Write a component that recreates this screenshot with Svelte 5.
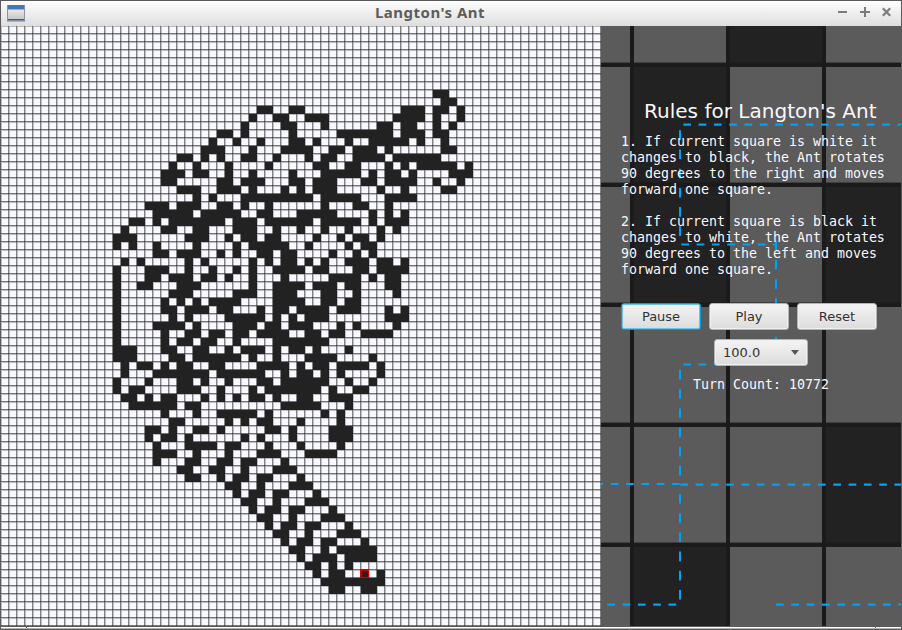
<script>
  const CELL = 8;
  const SIZE = 75;
  const TURNS = 10772;
  // The counter runs two turns ahead of the painted board.
  const PAINTED = TURNS - 2;
  const antCol = 45;
  const antRow = 68;

  // Runs the ant on an unbounded plane and returns the black squares
  // relative to the ant's last position.
  function simulate(turns) {
    const black = new Set();
    let x = 0;
    let y = 0;
    let dx = 0;
    let dy = -1;
    for (let i = 0; i < turns; i++) {
      const key = x + ',' + y;
      if (black.has(key)) {
        black.delete(key);
        [dx, dy] = [dy, -dx];
      } else {
        black.add(key);
        [dx, dy] = [-dy, dx];
      }
      x += dx;
      y += dy;
    }
    let cells = [...black].map((k) => k.split(',').map(Number)).map(([a, b]) => [a - x, b - y]);
    let end = [x, y];
    // Turn the board until the highway leaves toward the lower right.
    while (!(end[0] > 0 && end[1] > 0)) {
      cells = cells.map(([a, b]) => [-b, a]);
      end = [-end[1], end[0]];
    }
    return cells;
  }

  const blackPath = simulate(PAINTED)
    .map(([a, b]) => `M${(a + antCol) * CELL} ${(b + antRow) * CELL}h8v8h-8z`)
    .join('');

  const steps = Array.from({ length: SIZE }, (_, i) => i * CELL);
  const darkLines = steps.map((p) => `M${p + 7} 0h1v600h-1z`).join('');
  const softLines = steps.map((p) => `M${p} 0h1v600h-1z`).join('');
  const darkRows = steps.map((p) => `M0 ${p + 7}h600v1h-600z`).join('');
  const softRows = steps.map((p) => `M0 ${p}h600v1h-600z`).join('');

  const tiles = [[127, -82], [31, 38], [31, 158], [223, 158], [223, 398], [31, 518]];
  const columns = [29, 125, 221];
  const rows = [36, 156, 276, 396, 516];

  const across = [
    'M82.3 98.7H300',
    'M80.3 218.5H176',
    'M82.3 338.5H176',
    'M-5.5 458H80',
    'M79.3 458.6H300',
    'M6.3 578.6H76',
    'M175 578.6H300'
  ];
  const down = ['M79 104.3V218', 'M175 214.8V338', 'M79 344V458', 'M79 468V575'];

  const rules = [
    ['1. If current square is white it', 'changes to black, the Ant rotates', '90 degrees to the right and moves', 'forward one square.'],
    ['2. If current square is black it', 'changes to white, the Ant rotates', '90 degrees to the left and moves', 'forward one square.']
  ];
</script>

<div class="window">
  <header>
    <svg class="app" width="18" height="17" viewBox="0 0 18 17">
      <defs>
        <linearGradient id="pane" x1="0" y1="0" x2="0" y2="1">
          <stop offset="0" stop-color="#e8e8e6" /><stop offset="1" stop-color="#c6c6c4" />
        </linearGradient>
      </defs>
      <rect width="18" height="17" fill="#8b94a2" />
      <rect x="1" width="16" height="4" fill="#4278b8" />
      <rect x="1" y="4" width="16" height="1" fill="#8fb2df" />
      <rect x="1" y="5" width="16" height="9" fill="url(#pane)" />
      <rect x="1" y="14" width="16" height="1" fill="#35609c" />
      <rect y="15" width="18" height="1" fill="#7d8da4" />
      <rect y="16" width="18" height="1" fill="#b4b4b4" />
    </svg>
    <h1>Langton's Ant</h1>
    <svg class="controls" width="54" height="11" viewBox="0 0 54 11" fill="none" stroke="#7b7b7b" stroke-width="2">
      <path d="M0 6H9M22 6H32M27 1V11" />
      <path d="M44.8 2.3L52.2 9.7M52.2 2.3L44.8 9.7" stroke-width="2.2" />
    </svg>
  </header>

  <main>
    <svg class="board" width="600" height="600" viewBox="0 0 600 600" shape-rendering="crispEdges">
      <rect width="600" height="600" fill="#f8f8ff" />
      <path d={softLines + softRows} fill="#222" fill-opacity="0.28" />
      <path d={darkLines} fill="#222" fill-opacity="0.54" />
      <path d={darkRows} fill="#222" fill-opacity="0.6" />
      <path d={blackPath} fill="#222" />
      <rect x={antCol * CELL - 1} y={antRow * CELL - 1} width="9" height="9" fill="#d00000" />
      <rect x={antCol * CELL + 1} y={antRow * CELL + 1} width="6" height="6" fill="#501010" />
      <rect x={antCol * CELL + 2} y={antRow * CELL + 2} width="4" height="4" fill="#222" />
    </svg>

    <aside>
      <svg class="backdrop" width="300" height="600" viewBox="0 0 300 600">
        <rect width="300" height="600" fill="#5b5b5b" />
        {#each tiles as [x, y]}
          <rect {x} {y} width="96" height="120" fill="#222" />
        {/each}
        {#each columns as x}
          <rect {x} width="4" height="600" fill="#1b1b1b" />
        {/each}
        {#each rows as y}
          <rect y={y + 0.6} width="300" height="4.4" fill="#1b1b1b" />
        {/each}
        {#each across as d}
          <path {d} stroke="#00a2f1" stroke-width="2.2" stroke-dasharray="7.7 7.6" />
        {/each}
        {#each down as d}
          <path {d} stroke="#00a2f1" stroke-width="2" stroke-dasharray="9.6 9.6" />
        {/each}
      </svg>
      <div class="panel">
        <h2>Rules for Langton's Ant</h2>
        {#each rules as rule}
          <p>
            {#each rule as line}<span>{line}</span>{/each}
          </p>
        {/each}
        <div class="buttons">
          <button class="focused">Pause</button>
          <button>Play</button>
          <button>Reset</button>
        </div>
        <div class="speed"><span>100.0</span><i></i></div>
        <div class="count">Turn Count: {TURNS}</div>
      </div>
    </aside>
  </main>
  <footer></footer>
</div>

<style>
  :global(body) {
    margin: 0;
    overflow: hidden;
  }
  .window {
    box-sizing: border-box;
    width: 902px;
    height: 630px;
    border: 1px solid #5b5b5b;
    display: flex;
    flex-direction: column;
    background: #5b5b5b;
  }
  header {
    height: 25px;
    display: flex;
    align-items: flex-start;
    background: linear-gradient(#fff, #f4f4f4 30%, #dedede);
  }
  .app {
    margin: 4px 0 0 6px;
  }
  h1 {
    flex: 1;
    margin: 0 3px 0 0;
    text-align: center;
    font: bold 15px/23px 'Noto Sans', 'Open Sans', sans-serif;
    letter-spacing: 0.5px;
    color: #5d5d5d;
  }
  .controls {
    margin: 5px 9px 0 0;
  }
  main {
    display: flex;
    height: 600px;
  }
  .board {
    display: block;
    flex: none;
  }
  aside {
    display: grid;
    width: 300px;
    height: 600px;
    overflow: hidden;
  }
  .backdrop,
  .panel {
    grid-area: 1 / 1;
  }
  .panel {
    position: relative;
    padding: 72px 20px 0;
    color: #f8f8ff;
    display: flex;
    flex-direction: column;
  }
  h2 {
    margin: 0 0 9px;
    font: 20.05px/27px 'DejaVu Sans', sans-serif;
    white-space: nowrap;
    padding-left: 23px;
  }
  p {
    margin: 0 0 16px;
    font: 13.29px/16px 'DejaVu Sans Mono', monospace;
    white-space: pre;
  }
  p span {
    display: block;
  }
  .buttons {
    display: flex;
    gap: 8px;
    margin-top: 9px;
  }
  button,
  .speed {
    box-sizing: border-box;
    font: 13px/24px 'DejaVu Sans', sans-serif;
    color: #333;
    border: 1px solid #b4b4b4;
    border-radius: 3px;
    background: linear-gradient(#f4f4f4, #dcdcdc);
    box-shadow: inset 0 0 0 1px #f0f0f0;
  }
  button {
    width: 80px;
    height: 27px;
    padding: 0;
  }
  .focused {
    border-color: #039ed3;
    box-shadow: inset 0 0 0 1px #6cc5e6;
  }
  .speed {
    width: 94px;
    height: 27px;
    margin: 9px 0 0 93px;
    padding: 0 8px;
    display: flex;
    align-items: center;
    justify-content: space-between;
  }
  .speed i {
    border: 4.5px solid transparent;
    border-top: 5px solid #555;
    border-bottom: 0;
  }
  .count {
    margin: 11px 0 0 72px;
    font: 13.29px/16px 'DejaVu Sans Mono', monospace;
  }
  footer {
    margin-top: 1px;
    height: 1px;
    background: linear-gradient(90deg, #fff 25px, #5b5b5b 25px 26px, #fff 26px 874px, #5b5b5b 874px 875px, #fff 875px);
    border-bottom: 1px solid #b0b0b0;
  }
</style>
